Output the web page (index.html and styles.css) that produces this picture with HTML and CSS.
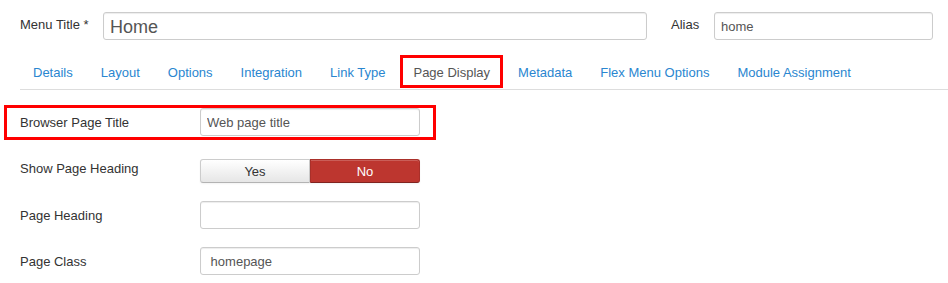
FILE: index.html
```html
<!DOCTYPE html>
<html lang="en">
<head>
  <meta charset="UTF-8">
  <meta name="viewport" content="width=device-width, initial-scale=1.0">
  <title>Edit Menu Item</title>
  <link rel="stylesheet" href="styles.css">
</head>
<body>
  <div class="page">
    <div class="title-row">
      <label class="title-label" for="title">Menu Title *</label>
      <input type="text" id="title" class="input-title" value="Home">
      <label class="alias-label" for="alias">Alias</label>
      <input type="text" id="alias" class="input-alias" value="home">
    </div>

    <ul class="nav-tabs">
      <li><a href="#details">Details</a></li>
      <li><a href="#layout">Layout</a></li>
      <li><a href="#options">Options</a></li>
      <li><a href="#integration">Integration</a></li>
      <li><a href="#linktype">Link Type</a></li>
      <li><a href="#pagedisplay" class="active">Page Display</a></li>
      <li><a href="#metadata">Metadata</a></li>
      <li><a href="#flexmenu">Flex Menu Options</a></li>
      <li><a href="#modules">Module Assignment</a></li>
    </ul>

    <div class="control-group highlight">
      <label class="control-label" for="page_title">Browser Page Title</label>
      <input type="text" id="page_title" class="input-field" value="Web page title">
    </div>

    <div class="control-group toggle-group">
      <label class="control-label flush">Show Page Heading</label>
      <div class="btn-group">
        <button class="btn">Yes</button>
        <button class="btn btn-danger">No</button>
      </div>
    </div>

    <div class="control-group">
      <label class="control-label" for="page_heading">Page Heading</label>
      <input type="text" id="page_heading" class="input-field" value="">
    </div>

    <div class="control-group">
      <label class="control-label" for="pageclass">Page Class</label>
      <input type="text" id="pageclass" class="input-field" value=" homepage">
    </div>
  </div>
</body>
</html>
```

FILE: styles.css
```css
body {
  margin: 0;
  font-family: "Liberation Sans", Arial, sans-serif;
  font-size: 13px;
  line-height: 18px;
  color: #333;
  background: #ffffff;
}

.page {
  padding: 12px 0 0 20px;
}

input {
  height: 28px;
  box-sizing: border-box;
  margin: 0;
  padding: 0 6px;
  border: 1px solid #ccc;
  border-radius: 3px;
  box-shadow: inset 0 1px 1px rgba(0, 0, 0, 0.075);
  font-family: inherit;
  font-size: 13px;
  color: #555;
  background: #fff;
}

.title-row {
  display: flex;
  align-items: flex-start;
}

.title-label {
  width: 83px;
  padding-top: 4px;
}

.input-title {
  width: 544px;
  font-size: 18px;
  padding-top: 2px;
}

.alias-label {
  width: 43px;
  margin-left: 24px;
  padding-top: 4px;
}

.input-alias {
  width: 219px;
}

.nav-tabs {
  display: flex;
  align-items: flex-end;
  list-style: none;
  margin: 15px 0 0;
  padding: 0;
  border-bottom: 1px solid #ddd;
}

.nav-tabs a {
  display: block;
  margin: 0 2px 1px 0;
  padding: 6px 10px 4px;
  line-height: 17px;
  border: 3px solid transparent;
  color: #2a86d0;
  text-decoration: none;
}

.nav-tabs a.active {
  color: #555;
  border-color: #f00;
}

.control-group {
  display: flex;
  align-items: flex-start;
  margin-bottom: 18px;
}

.control-group.highlight {
  width: 432px;
  box-sizing: border-box;
  margin: 15px 0 19px -16px;
  padding: 0 0 1px 13px;
  border: 3px solid #f00;
}

.control-label {
  width: 180px;
  padding-top: 6px;
}

.control-label.flush {
  padding-top: 1px;
}

.input-field {
  width: 220px;
}

.btn-group {
  display: flex;
  width: 220px;
}

.btn {
  flex: 1;
  height: 24px;
  margin: 0;
  padding: 1px 0 0;
  font-family: inherit;
  font-size: 13px;
  color: #333;
  border: 1px solid #ccc;
  border-bottom-color: #b3b3b3;
  background: linear-gradient(#ffffff, #e6e6e6);
  box-shadow: inset 0 1px 0 rgba(255, 255, 255, 0.2), 0 1px 2px rgba(0, 0, 0, 0.05);
  cursor: pointer;
}

.btn:first-child {
  border-radius: 3px 0 0 3px;
}

.btn:last-child {
  border-radius: 0 3px 3px 0;
}

.btn-danger {
  color: #fff;
  background: #bd362f;
  border-color: #a9302a;
  border-bottom-color: #802420;
}
```
